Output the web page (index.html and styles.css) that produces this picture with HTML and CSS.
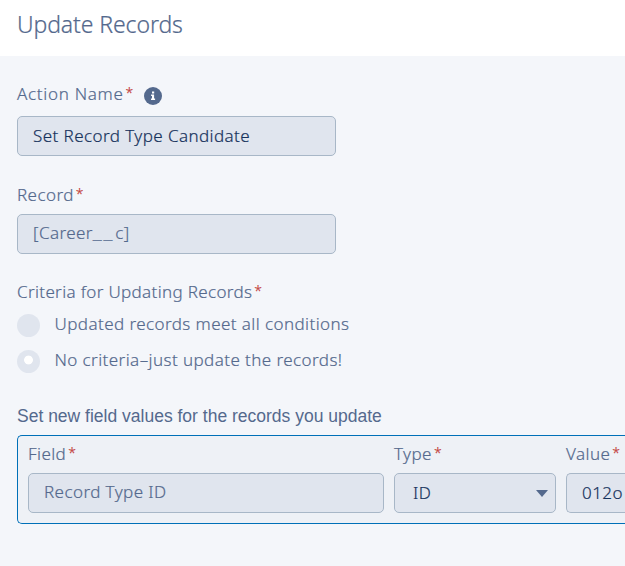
FILE: index.html
```html
<!DOCTYPE html>
<html lang="en">
<head>
<meta charset="utf-8">
<title>Update Records</title>
<link rel="stylesheet" href="styles.css">
</head>
<body>
<header class="header"><h1 class="title">Update Records</h1></header>
<main class="form">
  <section class="action">
    <div class="label"><span class="name">Action Name</span><b class="req">*</b>
      <svg class="info" viewBox="0 0 18 18"><circle cx="9" cy="9" r="9"/><path d="M8 4.6h2.2v2H8zM7.1 7.6h3v4h1v1.3H7v-1.3h1V8.9h-.9z"/></svg>
    </div>
    <div class="input dark">Set Record Type Candidate</div>
  </section>
  <section class="record">
    <div class="label">Record<b class="req">*</b></div>
    <div class="input raised"><span>[Career<span class="wide">__</span>c]</span></div>
  </section>
  <section class="criteria">
    <div class="label"><span class="long">Criteria for Updating Records</span><b class="req">*</b></div>
    <div class="option"><i class="radio"></i><span>Updated records meet all conditions</span></div>
    <div class="option"><i class="radio checked"></i><span>No criteria–just update the records!</span></div>
  </section>
  <p class="caption">Set new field values for the records you update</p>
  <section class="values">
    <div class="column field">
      <div class="label">Field<b class="req">*</b></div>
      <div class="input raised">Record Type ID</div>
    </div>
    <div class="column type">
      <div class="label">Type<b class="req">*</b></div>
      <div class="input dark select"><span>ID</span><svg class="arrow" viewBox="0 0 12 7"><path d="M0 0h12L6 7z"/></svg></div>
    </div>
    <div class="column value">
      <div class="label">Value<b class="req">*</b></div>
      <div class="input dark">012o</div>
    </div>
  </section>
</main>
</body>
</html>
```
FILE: styles.css
```css
* { box-sizing: border-box; }
body {
  margin: 0;
  height: 566px;
  overflow: hidden;
  background: #f4f6fa;
  color: #54698d;
  font: 300 17px/24px "Noto Sans", sans-serif;
  letter-spacing: 0.42px;
  -webkit-text-stroke: 0.2px currentColor;
  white-space: nowrap;
}
.header { height: 56px; padding: 8px 17px; background: #fff; }
.title { margin: 0; font-size: 23px; line-height: 32px; font-weight: 300; letter-spacing: -0.1px; }
.form { padding: 26px 0 0 17px; }
.label { display: flex; height: 24px; }
.name { letter-spacing: 0.7px; }
.long { letter-spacing: 0.34px; }
.req { margin-left: 2px; color: #c23934; font-weight: 300; font-size: 14px; line-height: 22px; letter-spacing: 0; }
.info { width: 18px; height: 18px; margin: 5px 0 0 11px; fill: #54698d; }
.info path { fill: #fff; }
.input {
  display: flex;
  align-items: center;
  width: 319px;
  height: 40px;
  padding: 0 15px 1px;
  border: 1px solid #a8b7c7;
  border-radius: 5px;
  background: #e0e5ee;
}
.raised { padding-bottom: 3px; }
.dark { color: #16325c; }
.wide { display: inline-block; transform: scaleX(1.25); margin: 0 3px 0 2px; letter-spacing: 1.5px; }
.action .input { margin-top: 10px; }
.record { margin-top: 27px; }
.record .input { margin-top: 7px; }
.criteria { margin-top: 26px; }
.option { display: flex; height: 24px; margin-top: 8px; }
.option + .option { margin-top: 12px; }
.radio { width: 23px; height: 23px; margin: 2px 14.5px 0 0; border-radius: 50%; background: #e0e5ee; }
.checked { background: radial-gradient(circle at 11.5px 10px, #fff 4px, #e0e5ee 4.8px); }
.caption { margin: 32px 0 0; font: 400 17.5px/24px "Liberation Sans", sans-serif; letter-spacing: 0; -webkit-text-stroke: 0; }
.values {
  display: flex;
  gap: 10px;
  height: 89px;
  margin-top: 7px;
  padding: 6px 0 6px 10px;
  border: 1px solid #0070b8;
  border-right: 0;
  border-radius: 5px 0 0 5px;
  background: #eef1f6;
}
.values .input { width: 100%; margin-top: 7px; }
.column { flex: none; }
.field { width: 356px; }
.type { width: 162px; }
.value { flex: 1; min-width: 0; }
.value .input { padding-right: 0; border-right: 0; border-radius: 5px 0 0 5px; overflow: hidden; }
.values .select { justify-content: space-between; padding: 0 7px 1px 18px; }
.arrow { width: 12px; height: 7px; margin-top: 1px; fill: #54698d; }
```
